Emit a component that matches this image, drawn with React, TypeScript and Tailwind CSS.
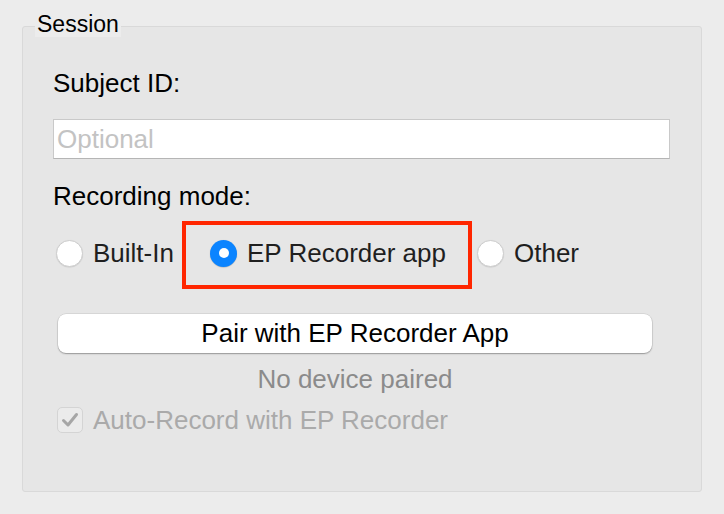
import { useState } from "react";

type Mode = "builtin" | "ep" | "other";

const modes: { value: Mode; label: string; width: string }[] = [
  { value: "builtin", label: "Built-In", width: "w-[154px]" },
  { value: "ep", label: "EP Recorder app", width: "w-[267px]" },
  { value: "other", label: "Other", width: "w-[120px]" },
];

function Radio({ checked }: { checked: boolean }) {
  if (checked) {
    return (
      <span className="flex h-[27px] w-[27px] shrink-0 items-center justify-center rounded-full bg-[#0b84ff] shadow-[0_0.5px_1px_rgba(0,0,0,0.25)]">
        <span className="h-[10px] w-[10px] rounded-full bg-white" />
      </span>
    );
  }
  return (
    <span className="h-[27px] w-[27px] shrink-0 rounded-full border border-[#cdcdcd] bg-white shadow-[0_0.5px_1px_rgba(0,0,0,0.12)]" />
  );
}

export default function App() {
  const [mode, setMode] = useState<Mode>("ep");
  const [subject, setSubject] = useState("");

  return (
    <div
      className="h-[514px] w-[724px] overflow-hidden bg-[#ececec] px-[22px] pt-[26px]"
      style={{ fontFamily: '"Liberation Sans", Arial, sans-serif' }}
    >
      <div className="relative h-[466px] w-[680px] rounded-[3px] border border-[#d9d9d9] bg-[#e6e6e6] pl-[30px] pr-[31px] pt-[41px]">
        {/* Group title */}
        <span className="absolute left-[12px] top-[-16px] bg-[#ececec] px-[2px] text-[23px] leading-[26px] text-black">
          Session
        </span>

        <p className="text-[26px] leading-[30px] text-black">Subject ID:</p>

        <input
          value={subject}
          onChange={(e) => setSubject(e.target.value)}
          placeholder="Optional"
          className="mt-[21px] block h-[40px] w-full border border-[#c9c9c9] border-b-[#b5b5b5] bg-white px-[3px] text-[26px] text-black outline-none placeholder:text-[#c3c3c3]"
        />

        <p className="mt-[22px] text-[26px] leading-[30px] text-black">Recording mode:</p>

        {/* Radio row */}
        <div className="ml-[3px] mt-[27px] flex h-[30px] items-center">
          {modes.map((m) => (
            <button
              key={m.value}
              type="button"
              onClick={() => setMode(m.value)}
              className={`relative flex items-center gap-[10px] ${m.width}`}
            >
              <Radio checked={mode === m.value} />
              <span className="whitespace-nowrap text-[26px] leading-[30px] text-[#1f1f1f]">
                {m.label}
              </span>
              {m.value === "ep" && (
                <span className="pointer-events-none absolute left-[-28px] top-[-17px] h-[68px] w-[290px] border-4 border-[#ff2600]" />
              )}
            </button>
          ))}
        </div>

        <button
          type="button"
          className="ml-[5px] mt-[46px] flex h-[39px] w-[594px] items-center justify-center rounded-[8px] bg-white text-[26px] text-black shadow-[0_0_0_0.5px_rgba(0,0,0,0.12),0_1px_1.5px_rgba(0,0,0,0.3)]"
        >
          Pair with EP Recorder App
        </button>

        <p className="ml-[5px] mt-[11px] w-[594px] text-center text-[26px] leading-[30px] text-[#8b8b8b]">
          No device paired
        </p>

        <div className="ml-[4px] mt-[11px] flex items-center gap-[10px]">
          <span className="flex h-[26px] w-[26px] items-center justify-center rounded-[5px] border border-[#d4d4d4] bg-[#ebebeb]">
            <svg width="18" height="16" viewBox="0 0 18 16" fill="none" stroke="#a6a6a6" strokeWidth="3" strokeLinecap="round" strokeLinejoin="round">
              <polyline points="2.5 8.5 7 13 15.5 2.5" />
            </svg>
          </span>
          <span className="text-[26px] leading-[30px] text-[#aaaaaa]">Auto-Record with EP Recorder</span>
        </div>
      </div>
    </div>
  );
}
